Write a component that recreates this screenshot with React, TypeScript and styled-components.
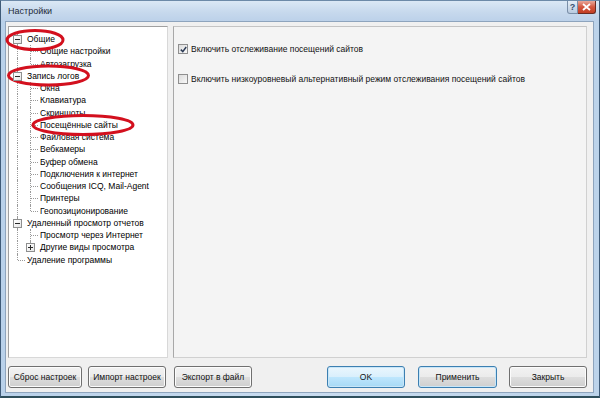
import React from 'react';
import styled, { createGlobalStyle } from 'styled-components';

const GlobalStyle = createGlobalStyle`
  html, body {
    margin: 0;
    padding: 0;
    background: #ffffff;
  }
  body {
    font-family: "Liberation Sans", Arial, sans-serif;
    font-size: 8.5px;
    color: #000;
  }
`;

interface TreeItem {
  label: string;
  level: 0 | 1;
  toggle?: 'minus' | 'plus';
  last?: boolean;
}

const items: TreeItem[] = [
  { label: 'Общие', level: 0, toggle: 'minus' },
  { label: 'Общие настройки', level: 1 },
  { label: 'Автозагрузка', level: 1, last: true },
  { label: 'Запись логов', level: 0, toggle: 'minus' },
  { label: 'Окна', level: 1 },
  { label: 'Клавиатура', level: 1 },
  { label: 'Скриншоты', level: 1 },
  { label: 'Посещённые сайты', level: 1 },
  { label: 'Файловая система', level: 1 },
  { label: 'Вебкамеры', level: 1 },
  { label: 'Буфер обмена', level: 1 },
  { label: 'Подключения к интернет', level: 1 },
  { label: 'Сообщения ICQ, Mail-Agent', level: 1 },
  { label: 'Принтеры', level: 1 },
  { label: 'Геопозиционирование', level: 1, last: true },
  { label: 'Удаленный просмотр отчетов', level: 0, toggle: 'minus' },
  { label: 'Просмотр через Интернет', level: 1 },
  { label: 'Другие виды просмотра', level: 1, toggle: 'plus', last: true },
  { label: 'Удаление программы', level: 0, last: true },
];

const App = () => {
  return (
    <>
      <GlobalStyle />
      <Window>
        <TitleBar>
          <Title>Настройки</Title>
          <Caption>
            <HelpBtn>?</HelpBtn>
            <CloseBtn>
              <svg width="9" height="8" viewBox="0 0 9 8">
                <path d="M1 1 L8 7 M8 1 L1 7" stroke="#fff" strokeWidth="1.8" />
              </svg>
            </CloseBtn>
          </Caption>
        </TitleBar>
        <Client>
          <Panels>
            <TreePanel>
              {items.map((it, i) => (
                <TreeRow key={i}>
                  <Gutter $line={!(it.level === 0 && it.last)}>
                    {it.level === 0 && it.toggle && <Toggle $plus={it.toggle === 'plus'} />}
                    {it.level === 0 && !it.toggle && <Branch $w={7} />}
                  </Gutter>
                  {it.level === 1 && (
                    <Gutter $line={!it.last}>
                      {it.toggle ? <Toggle $plus={it.toggle === 'plus'} /> : <Branch $w={7} />}
                    </Gutter>
                  )}
                  <Label>{it.label}</Label>
                </TreeRow>
              ))}
            </TreePanel>
            <OptionsPanel>
              <Option>
                <Check>
                  <svg width="7" height="7" viewBox="0 0 7 7">
                    <path d="M0.8 3.6 L2.8 5.6 L6.2 1" stroke="#2b3a55" strokeWidth="1.5" fill="none" />
                  </svg>
                </Check>
                <span>Включить отслеживание посещений сайтов</span>
              </Option>
              <Option>
                <Check />
                <span>Включить низкоуровневый альтернативный режим отслеживания посещений сайтов</span>
              </Option>
            </OptionsPanel>
          </Panels>
          <ButtonBar>
            <Group>
              <Button $w={74} $gap={0}>Сброс настроек</Button>
              <Button $w={78}>Импорт настроек</Button>
              <Button $w={78} $gap={8}>Экспорт в файл</Button>
            </Group>
            <Group>
              <Button $w={78} $gap={0} $variant="default">OK</Button>
              <Button $w={79} $gap={13} $variant="focus">Применить</Button>
              <Button $w={78} $gap={12}>Закрыть</Button>
            </Group>
          </ButtonBar>
        </Client>
        <Marks width="600" height="398" viewBox="0 0 600 398">
          <ellipse cx="34" cy="39" rx="28" ry="9.5" />
          <ellipse cx="47.5" cy="74.5" rx="40" ry="9.5" />
          <ellipse cx="82" cy="124" rx="50" ry="9.5" />
        </Marks>
      </Window>
    </>
  );
};

const Window = styled.div`
  position: relative;
  width: 600px;
  height: 398px;
  box-sizing: border-box;
  display: flex;
  flex-direction: column;
  background: linear-gradient(90deg, #b9d1ea 0%, #c9dcf0 50%, #bcd3ea 100%);
  border: 1px solid #3f5b78;
  border-top-color: #6d8aa8;
  border-bottom: 2px solid #2f4f5c;
  overflow: hidden;
`;

const TitleBar = styled.div`
  height: 20px;
  display: flex;
  align-items: center;
  justify-content: space-between;
  padding: 0 3px 0 7px;
  background: linear-gradient(180deg, #dbe8f5 0%, #c7d9ed 55%, #bcd1e9 100%);
`;

const Title = styled.div`
  font-size: 9px;
  color: #1e2a38;
`;

const Caption = styled.div`
  display: flex;
  align-self: flex-start;
`;

const HelpBtn = styled.div`
  width: 11px;
  height: 13px;
  box-sizing: border-box;
  border: 1px solid #7a8fa8;
  border-top: none;
  border-radius: 0 0 0 3px;
  background: linear-gradient(180deg, #e4edf7, #b9cbe0);
  color: #36506e;
  font-size: 9px;
  font-weight: bold;
  line-height: 12px;
  text-align: center;
`;

const CloseBtn = styled.div`
  width: 18px;
  height: 13px;
  box-sizing: border-box;
  border: 1px solid #6b2b22;
  border-top: none;
  border-left: none;
  border-radius: 0 0 3px 0;
  background: linear-gradient(180deg, #e9a99c 0%, #d4573f 50%, #c23d23 100%);
  display: flex;
  align-items: center;
  justify-content: center;
`;

const Client = styled.div`
  flex: 1;
  margin: 0 5px 3px 4px;
  padding: 4px 6px 0 2px;
  background: #f0f0f0;
  border: 1px solid #8ea4bd;
  display: flex;
  flex-direction: column;
`;

const Panels = styled.div`
  height: 332px;
  display: flex;
  gap: 5px;
`;

const TreePanel = styled.div`
  width: 160px;
  box-sizing: border-box;
  background: #fff;
  border: 1px solid #a0a0a0;
  border-right-color: #d8d8d8;
  border-bottom-color: #d8d8d8;
  padding: 6px 0 0 4px;
`;

const TreeRow = styled.div`
  display: flex;
  height: 12.25px;
  align-items: center;
  position: relative;
`;

const Gutter = styled.div<{ $line?: boolean }>`
  width: 13px;
  height: 100%;
  position: relative;
  flex-shrink: 0;
  &::before {
    content: '';
    position: absolute;
    left: 4px;
    top: 0;
    bottom: ${(p) => (p.$line ? '0' : '50%')};
    border-left: 1px dotted #9a9a9a;
  }
`;

const Branch = styled.div<{ $w: number }>`
  position: absolute;
  left: 5px;
  top: 50%;
  width: ${(p) => p.$w}px;
  border-top: 1px dotted #9a9a9a;
`;

const Toggle = styled.div<{ $plus?: boolean }>`
  position: absolute;
  left: 0;
  top: 50%;
  margin-top: -4px;
  width: 9px;
  height: 9px;
  box-sizing: border-box;
  border: 1px solid #8e8f8f;
  background: linear-gradient(135deg, #fff 0%, #e6e6e6 100%);
  z-index: 1;
  &::before {
    content: '';
    position: absolute;
    left: 1px;
    top: 3px;
    width: 5px;
    border-top: 1px solid #2a2a2a;
  }
  &::after {
    content: '';
    display: ${(p) => (p.$plus ? 'block' : 'none')};
    position: absolute;
    left: 3px;
    top: 1px;
    height: 5px;
    border-left: 1px solid #2a2a2a;
  }
`;

const Label = styled.div`
  padding-left: 1px;
  white-space: nowrap;
  line-height: 12px;
`;

const OptionsPanel = styled.div`
  flex: 1;
  box-sizing: border-box;
  background: #f4f4f4;
  border: 1px solid #d0d0d0;
  border-left-color: #a8a8a8;
  border-top-color: #c4c4c4;
  padding: 17px 0 0 4px;
  display: flex;
  flex-direction: column;
  gap: 20px;
`;

const Option = styled.label`
  display: flex;
  align-items: center;
  gap: 3px;
  white-space: nowrap;
  color: #111;
`;

const Check = styled.div`
  width: 10px;
  height: 10px;
  box-sizing: border-box;
  border: 1px solid #8f8f8f;
  background: linear-gradient(135deg, #dcdcdc 0%, #f8f8f8 100%);
  display: flex;
  align-items: center;
  justify-content: center;
`;

const ButtonBar = styled.div`
  display: flex;
  justify-content: space-between;
  padding-top: 8px;
`;

const Group = styled.div`
  display: flex;
`;

const Button = styled.div<{ $w: number; $gap?: number; $variant?: 'default' | 'focus' }>`
  width: ${(p) => p.$w}px;
  height: 22px;
  margin-left: ${(p) => p.$gap ?? 6}px;
  box-sizing: border-box;
  border: 1px solid ${(p) => (p.$variant ? '#3c7fb1' : '#707070')};
  border-radius: 3px;
  background: ${(p) =>
    p.$variant === 'default'
      ? 'linear-gradient(180deg, #eaf6fd 0%, #d9effc 50%, #bee6fd 51%, #a7d9f5 100%)'
      : 'linear-gradient(180deg, #f2f2f2 0%, #ebebeb 50%, #dddddd 51%, #cfcfcf 100%)'};
  box-shadow: inset 0 0 0 1px ${(p) => (p.$variant ? '#c8e6f8' : '#fcfcfc')};
  display: flex;
  align-items: center;
  justify-content: center;
  color: #111;
  white-space: nowrap;
`;

const Marks = styled.svg`
  position: absolute;
  left: 0;
  top: 0;
  pointer-events: none;
  ellipse {
    fill: none;
    stroke: #d3101e;
    stroke-width: 3;
  }
`;

export default App;
